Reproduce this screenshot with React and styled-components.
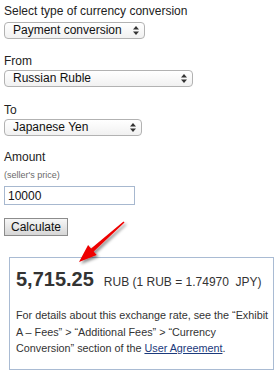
import React from "react";
import styled, { createGlobalStyle } from "styled-components";

const Global = createGlobalStyle`
  html, body { margin: 0; padding: 0; background: #fff; }
  body { font-family: "Liberation Sans", Arial, sans-serif; }
`;

const Page = styled.div`
  position: relative;
  width: 278px;
  height: 375px;
  box-sizing: border-box;
  padding: 4px 0 0 4px;
  font-size: 12px;
  color: #222;
  overflow: hidden;
`;

const Field = styled.div`
  display: flex;
  flex-direction: column;
  align-items: flex-start;
  margin-top: ${(p) => p.$top || 0}px;
`;

const Label = styled.div`
  font-size: 12px;
  line-height: 14px;
  color: #222;
  margin-bottom: ${(p) => p.$gap ?? 2}px;
`;

const Hint = styled.div`
  font-size: 9px;
  line-height: 11px;
  color: #6a6a6a;
  margin-top: 6px;
  margin-bottom: 5px;
`;

const SelectWrap = styled.div`
  position: relative;
  width: ${(p) => p.$w}px;
  height: 17px;
`;

const Select = styled.select`
  appearance: none;
  -webkit-appearance: none;
  width: 100%;
  height: 100%;
  box-sizing: border-box;
  margin: 0;
  border: 1px solid #b2b2b2;
  border-radius: 4px;
  background: linear-gradient(#ffffff, #f1f1f1);
  font-family: "Liberation Sans", Arial, sans-serif;
  font-size: 12px;
  color: #111;
  padding: 0 20px 0 8px;
  line-height: 15px;
  outline: none;
`;

const Arrows = styled.svg`
  position: absolute;
  right: 6px;
  top: 4px;
  pointer-events: none;
`;

const Input = styled.input`
  width: 131px;
  height: 19px;
  box-sizing: border-box;
  margin: 0;
  border: 1px solid #a7b8cf;
  padding: 0 3px;
  font-family: "Liberation Sans", Arial, sans-serif;
  font-size: 12px;
  color: #111;
  outline: none;
`;

const Button = styled.button`
  margin: 13px 0 0 0;
  width: 64px;
  height: 18px;
  box-sizing: border-box;
  padding: 0;
  border: 1px solid #8c8c8c;
  border-radius: 0;
  background: linear-gradient(#f7f7f7, #d6d6d6);
  font-family: "Liberation Sans", Arial, sans-serif;
  font-size: 12px;
  color: #111;
`;

const ResultBox = styled.div`
  margin: 21px 0 0 5px;
  width: 265px;
  height: 113px;
  box-sizing: border-box;
  border: 1px solid #a9bbd3;
  padding: 9px 0 0 6px;
  color: #333;
`;

const Amount = styled.div`
  display: flex;
  align-items: baseline;
  gap: 10px;
  line-height: 24px;
`;

const Big = styled.span`
  font-size: 20px;
  font-weight: bold;
  color: #333;
`;

const Rate = styled.span`
  font-size: 12px;
  color: #333;
`;

const Note = styled.p`
  margin: 13px 0 0 0;
  font-size: 10.8px;
  line-height: 16.5px;
  color: #333;
`;

const Link = styled.a`
  color: #1b3a7c;
  text-decoration: underline;
`;

const Pointer = styled.svg`
  position: absolute;
  left: 72px;
  top: 216px;
  overflow: visible;
`;

function UpDown() {
  return (
    <Arrows width="6" height="9" viewBox="0 0 6 9">
      <path d="M3 0 L6 3.6 L0 3.6 Z" fill="#333" />
      <path d="M0 5.4 L6 5.4 L3 9 Z" fill="#333" />
    </Arrows>
  );
}

function Dropdown({ w, value }) {
  return (
    <SelectWrap $w={w}>
      <Select defaultValue={value}>
        <option>{value}</option>
      </Select>
      <UpDown />
    </SelectWrap>
  );
}

export default function App() {
  return (
    <Page>
      <Global />
      <Field>
        <Label $gap={4}>Select type of currency conversion</Label>
        <Dropdown w={141} value="Payment conversion" />
      </Field>
      <Field $top={15}>
        <Label>From</Label>
        <Dropdown w={189} value="Russian Ruble" />
      </Field>
      <Field $top={16}>
        <Label>To</Label>
        <Dropdown w={138} value="Japanese Yen" />
      </Field>
      <Field $top={14}>
        <Label $gap={0}>Amount</Label>
        <Hint>(seller's price)</Hint>
        <Input defaultValue="10000" />
        <Button>Calculate</Button>
      </Field>
      <ResultBox>
        <Amount>
          <Big>5,715.25</Big>
          <Rate>RUB (1 RUB = 1.74970&nbsp; JPY)</Rate>
        </Amount>
        <Note>
          For details about this exchange rate, see the “Exhibit A – Fees” &gt;
          “Additional Fees” &gt; “Currency Conversion” section of the{" "}
          <Link href="#">User Agreement</Link>.
        </Note>
      </ResultBox>
      <Pointer width="60" height="52" viewBox="0 0 60 52">
        <defs>
          <filter id="sh" x="-30%" y="-30%" width="160%" height="160%">
            <feDropShadow dx="2" dy="2" stdDeviation="1.5" floodColor="#000" floodOpacity="0.45" />
          </filter>
        </defs>
        <path
          d="M52.5 6.6 L21.7 35.5 L24.7 38.9 L7 46 L16.1 29.1 L19.1 32.5 L51.5 5.4 Z"
          fill="#ee0000"
          filter="url(#sh)"
        />
      </Pointer>
    </Page>
  );
}
